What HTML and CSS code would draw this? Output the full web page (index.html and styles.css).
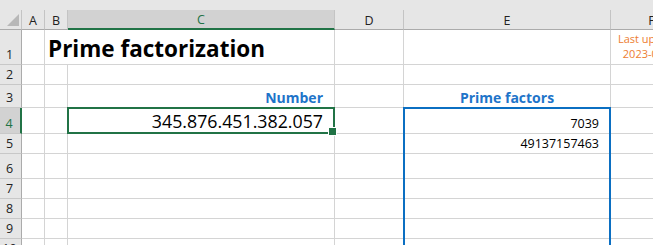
FILE: index.html
```html
<!DOCTYPE html>
<html>
<head>
<meta charset="utf-8">
<link rel="stylesheet" href="styles.css">
</head>
<body>
<div class="sheet">
  <div class="topbar"></div>
  <div class="stack">
    <div class="grid">
      <div class="corner"><span class="tri"></span></div>
      <div class="ch">A</div>
      <div class="ch">B</div>
      <div class="ch ch-sel">C</div>
      <div class="ch">D</div>
      <div class="ch">E</div>
      <div class="ch">F</div>

      <div class="rh">1</div>
      <div class="c"></div>
      <div class="c title">Prime factorization</div>
      <div class="c"></div>
      <div class="c"></div>
      <div class="c updated">Last updated 2023-03-15</div>

      <div class="rh">2</div>
      <div class="c"></div><div class="c"></div><div class="c"></div><div class="c"></div><div class="c"></div><div class="c"></div>

      <div class="rh">3</div>
      <div class="c"></div><div class="c"></div>
      <div class="c label right">Number</div>
      <div class="c"></div>
      <div class="c label center">Prime factors</div>
      <div class="c"></div>

      <div class="rh rh-sel">4</div>
      <div class="c"></div><div class="c"></div>
      <div class="c value">345.876.451.382.057</div>
      <div class="c"></div>
      <div class="c factor">7039</div>
      <div class="c"></div>

      <div class="rh">5</div>
      <div class="c"></div><div class="c"></div><div class="c"></div><div class="c"></div>
      <div class="c factor">49137157463</div>
      <div class="c"></div>

      <div class="rh">6</div>
      <div class="c"></div><div class="c"></div><div class="c"></div><div class="c"></div><div class="c"></div><div class="c"></div>
      <div class="rh">7</div>
      <div class="c"></div><div class="c"></div><div class="c"></div><div class="c"></div><div class="c"></div><div class="c"></div>
      <div class="rh">8</div>
      <div class="c"></div><div class="c"></div><div class="c"></div><div class="c"></div><div class="c"></div><div class="c"></div>
      <div class="rh">9</div>
      <div class="c"></div><div class="c"></div><div class="c"></div><div class="c"></div><div class="c"></div><div class="c"></div>
      <div class="rh">10</div>
      <div class="c"></div><div class="c"></div><div class="c"></div><div class="c"></div><div class="c"></div><div class="c"></div>
    </div>
    <div class="grid overlay">
      <div class="active-cell"></div>
      <div class="factor-box"></div>
    </div>
  </div>
</div>
</body>
</html>
```

FILE: styles.css
```css
* { box-sizing: border-box; }
html, body {
  margin: 0;
  padding: 0;
  background: #ffffff;
  overflow: hidden;
}
.sheet {
  width: 653px;
  height: 245px;
  overflow: hidden;
  font-family: "Open Sans", "Liberation Sans", sans-serif;
  color: #000;
}
.topbar {
  height: 10px;
  background: #e6e6e6;
}
.stack {
  display: grid;
  width: 713px;
}
.stack > .grid {
  grid-area: 1 / 1;
}
.grid {
  display: grid;
  grid-template-columns: 22px 23px 23px 267px 69px 207px 82px;
  grid-template-rows: 20px 35px 20px 23px 26px 20px 25px 20px 20px 20px 20px;
  width: 713px;
}
.overlay {
  pointer-events: none;
}
.corner {
  background: #e6e6e6;
  border-right: 1px solid #c4c4c4;
  border-bottom: 1px solid #ababab;
  display: flex;
  justify-content: flex-end;
  align-items: flex-end;
  padding: 0 2px 3px 0;
}
.tri {
  width: 0;
  height: 0;
  border-left: 12px solid transparent;
  border-bottom: 12px solid #b8b8b8;
}
.ch {
  background: #e6e6e6;
  border-right: 1px solid #c4c4c4;
  border-bottom: 1px solid #ababab;
  display: flex;
  align-items: center;
  justify-content: center;
  font-size: 12.5px;
  color: #222;
  padding-top: 1px;
}
.ch-sel {
  background: #d2d2d2;
  border-bottom: 2px solid #217346;
  color: #217346;
}
.rh {
  background: #e6e6e6;
  border-right: 1px solid #ababab;
  border-bottom: 1px solid #c8c8c8;
  display: flex;
  align-items: flex-end;
  justify-content: center;
  font-size: 12.5px;
  color: #222;
  padding-bottom: 1px;
  padding-right: 2px;
  overflow: hidden;
}
.rh-sel {
  background: #d2d2d2;
  border-right: 2px solid #217346;
  color: #217346;
}
.c {
  border-right: 1px solid #d4d4d4;
  border-bottom: 1px solid #d4d4d4;
  display: flex;
  align-items: flex-end;
  white-space: nowrap;
  overflow: hidden;
}
.title {
  grid-column: span 2;
  font-weight: 700;
  font-size: 22.5px;
  padding-left: 3px;
  padding-bottom: 0;
}
.updated {
  white-space: normal;
  justify-content: center;
  text-align: center;
  font-size: 11px;
  line-height: 15px;
  color: #ed7d31;
  padding-bottom: 3px;
  overflow: hidden;
}
.label {
  font-weight: 700;
  font-size: 14px;
  color: #1e74c9;
}
.right {
  justify-content: flex-end;
  padding-right: 11px;
}
.center {
  justify-content: center;
}
.value {
  justify-content: flex-end;
  font-size: 17.8px;
  padding-right: 11px;
}
.factor {
  justify-content: flex-end;
  font-size: 12.5px;
  padding-right: 11px;
  padding-bottom: 1px;
}
.active-cell {
  grid-column: 4;
  grid-row: 5;
  margin: -1px 0 0 -1px;
  border: 2px solid #217346;
  position: relative;
}
.active-cell::after {
  content: "";
  position: absolute;
  right: -4px;
  bottom: -4px;
  width: 7px;
  height: 7px;
  background: #217346;
  border: 1px solid #ffffff;
}
.factor-box {
  grid-column: 6;
  grid-row: 5 / 12;
  margin: -1px 0 0 -1px;
  border: 2px solid #0b6fc2;
}
```
